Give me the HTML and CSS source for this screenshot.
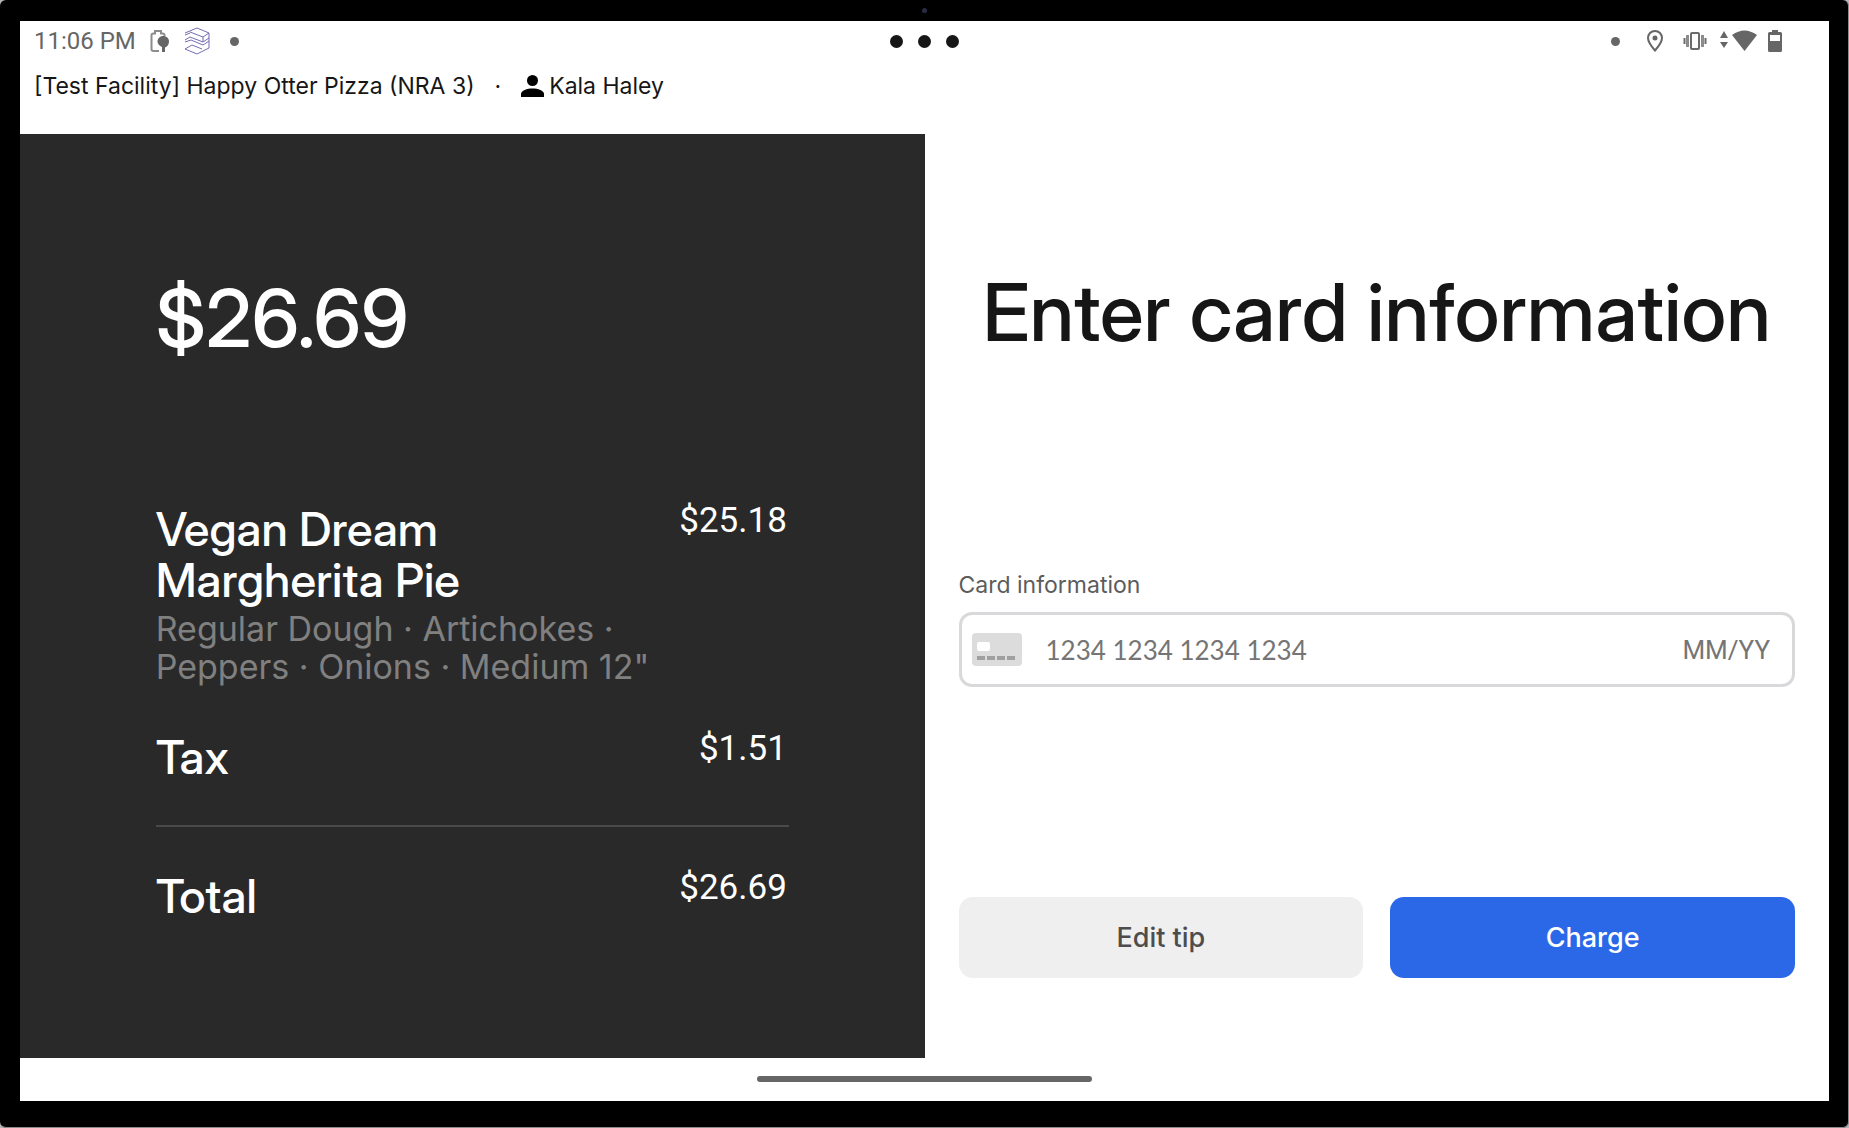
FILE: index.html
```html
<!DOCTYPE html>
<html lang="en">
<head>
    <meta charset="UTF-8">
    <meta name="viewport" content="width=device-width, initial-scale=1.0">
    <title>Enter card information</title>
    <link rel="stylesheet" href="styles.css">
</head>
<body>
    <div class="device">
        <span class="camera"></span>
        <div class="screen">
            <div class="status-bar">
                <div class="status-left">
                    <span class="clock">11:06 PM</span>
                    <svg class="icon-saver" width="20" height="24" viewBox="0 0 20 24">
                        <path d="M9 22H3.500Q1.500 22 1.500 20V6Q1.500 4.500 3.500 4.500H5V2H11V4.500H12.500Q14.500 4.500 14.500 6V7" fill="none" stroke="#8c8c8c" stroke-width="2"/>
                        <path d="M13 7C17 7 19 9.500 19 12.500C19 15.500 17 18 15 18.500V23H12V18C9.500 17 7.500 15 7.500 12.500C7.500 9.500 10 7 13 7Z" fill="#666"/>
                    </svg>
                    <svg class="icon-layers" width="26" height="28" viewBox="0 0 26 28" fill="none" stroke="#736db5" stroke-width="1">
                        <path d="M1 6L13 1L25 6L19 10L6 5M1 8L6 6"/>
                        <path d="M25 6V11L19 15L6 10L1 13"/>
                        <path d="M1 15L7 13L19 18L25 14V21L13 27L1 22L8 18L18 22"/>
                        <path d="M19 10V15M25 11V14"/>
                    </svg>
                    <span class="dot"></span>
                </div>
                <div class="status-center">
                    <span></span><span></span><span></span>
                </div>
                <div class="status-right">
                    <span class="dot"></span>
                    <svg class="icon-pin" width="16" height="22" viewBox="0 0 16 22">
                        <path d="M8 1C4 1 1 4 1 8C1 12.500 8 20.500 8 20.500S15 12.500 15 8C15 4 12 1 8 1Z" fill="none" stroke="#666" stroke-width="2"/>
                        <circle cx="8" cy="8" r="2.500" fill="#666"/>
                    </svg>
                    <svg class="icon-vibrate" width="24" height="18" viewBox="0 0 24 18" fill="none" stroke="#6b6b6b">
                        <rect x="8" y="1" width="8" height="16" rx="1" stroke-width="2"/>
                        <path d="M4.500 3V15M19.500 3V15" stroke-width="3" stroke="#8c8c8c"/>
                        <path d="M1.500 6V12M22.500 6V12" stroke-width="2"/>
                    </svg>
                    <svg class="icon-wifi" width="37" height="22" viewBox="0 0 37 22" fill="#666">
                        <path d="M0 8L4 1L8 8ZM0 12L4 18L8 12Z"/>
                        <path d="M12 5Q24.500 -4 37 5L24.500 21Z"/>
                    </svg>
                    <svg class="icon-battery" width="14" height="22" viewBox="0 0 14 22">
                        <path d="M4 0H10V2H12.500Q14 2 14 3.500V20.500Q14 22 12.500 22H1.500Q0 22 0 20.500V3.500Q0 2 1.500 2H4Z" fill="#666"/>
                        <rect x="2" y="5" width="10" height="6" fill="#fff"/>
                    </svg>
                </div>
            </div>

            <header class="facility-bar">
                <span>[Test Facility] Happy Otter Pizza (NRA 3)</span>
                <span class="separator">·</span>
                <span class="employee">
                    <svg width="23" height="22" viewBox="0 0 23 22">
                        <circle cx="11.500" cy="5.500" r="5.500"/>
                        <path d="M0 22V19C0 15.500 6 13.500 11.500 13.500S23 15.500 23 19V22Z"/>
                    </svg>
                    Kala Haley
                </span>
            </header>

            <main class="checkout">
                <section class="summary">
                    <p class="amount">$26.69</p>
                    <div class="line-item">
                        <div class="line-name">
                            <h2>Vegan Dream Margherita Pie</h2>
                            <p class="modifiers">Regular Dough · Artichokes · Peppers · Onions · Medium 12"</p>
                        </div>
                        <span class="price">$25.18</span>
                    </div>
                    <div class="line-item">
                        <h2>Tax</h2>
                        <span class="price">$1.51</span>
                    </div>
                    <hr>
                    <div class="line-item">
                        <h2>Total</h2>
                        <span class="price">$26.69</span>
                    </div>
                </section>

                <form class="payment">
                    <h1>Enter card information</h1>
                    <label for="cardNumber">Card information</label>
                    <div class="card-field">
                        <svg width="50" height="33" viewBox="0 0 50 33">
                            <rect width="50" height="33" rx="4" fill="#dcdcdc"/>
                            <rect x="5" y="9" width="13" height="9" rx="2" fill="#fff"/>
                            <path d="M5 25H45" stroke="#a0a0a0" stroke-width="4" stroke-dasharray="8 2"/>
                        </svg>
                        <input type="text" id="cardNumber" class="card-number" placeholder="1234 1234 1234 1234">
                        <input type="text" class="card-expiry" placeholder="MM/YY" aria-label="Expiration date">
                    </div>
                    <div class="actions">
                        <button type="button" class="btn">Edit tip</button>
                        <button type="submit" class="btn btn-primary">Charge</button>
                    </div>
                </form>
            </main>

            <div class="nav-bar"><span class="nav-handle"></span></div>
        </div>
    </div>
</body>
</html>
```

FILE: styles.css
```css
* {
    margin: 0;
    padding: 0;
    box-sizing: border-box;
}

body {
    font-family: Inter, Roboto, sans-serif;
    background: #b5b5b9;
    color: #161616;
}

svg {
    display: block;
    flex-shrink: 0;
}

/* tablet bezel */
.device {
    position: relative;
    display: flex;
    min-height: 100vh;
    padding: 21px 19px 26px 20px;
    background: #000;
    border: solid #8c8c8c;
    border-width: 0 1px 1px 0;
    border-radius: 6px;
}

.camera {
    position: absolute;
    top: 8px;
    left: 50%;
    width: 5px;
    height: 5px;
    margin-left: -2px;
    border-radius: 50%;
    background: #2b2b45;
}

.screen {
    flex: 1;
    display: flex;
    flex-direction: column;
    background: #fff;
}

/* status bar */
.status-bar {
    display: grid;
    grid-template-columns: 1fr auto 1fr;
    align-items: center;
    height: 40px;
    padding: 0 14px;
}

.status-left,
.status-center,
.status-right {
    display: flex;
    align-items: center;
}

.clock {
    font-family: Roboto, sans-serif;
    font-size: 24px;
    line-height: 28px;
    color: #666;
}

.icon-saver {
    margin-left: 14px;
}

.icon-layers {
    margin-left: 14px;
}

.dot {
    width: 9px;
    height: 9px;
    border-radius: 50%;
    background: #666;
}

.status-left .dot {
    margin-left: 20px;
}

.status-center {
    gap: 15px;
}

.status-center span {
    width: 13px;
    height: 13px;
    border-radius: 50%;
    background: #161616;
}

.status-right {
    justify-content: flex-end;
    padding-right: 33px;
}

.icon-pin {
    margin-left: 27px;
}

.icon-vibrate {
    margin-left: 20px;
}

.icon-wifi {
    margin-left: 13px;
}

.icon-battery {
    margin-left: 11px;
}

.facility-bar {
    display: flex;
    align-items: center;
    padding: 11px 14px 34px;
    font-size: 23px;
    line-height: 28px;
}

.separator {
    margin: 0 20px;
}

.employee {
    display: flex;
    align-items: center;
    gap: 5px;
}

.checkout {
    flex: 1;
    display: grid;
    grid-template-columns: minmax(0, 1fr) minmax(0, 1fr);
}

/* order summary */
.summary {
    padding: 136px 15% 0;
    background: #292929;
    color: #fff;
}

.amount,
.summary h2,
.payment h1 {
    font-family: "Inter Display", Inter, sans-serif;
    font-weight: 500;
}

.amount {
    margin-bottom: 136px;
    font-size: 80px;
    line-height: 96px;
}

.line-item {
    display: flex;
    justify-content: space-between;
    align-items: flex-start;
    margin-bottom: 42px;
}

.line-name {
    width: 500px;
    padding-bottom: 2px;
}

.line-item h2 {
    max-width: 340px;
    padding-top: 1px;
    font-size: 47px;
    line-height: 51px;
}

.modifiers {
    margin-top: 5px;
    font-size: 34px;
    line-height: 38px;
    color: #808080;
}

.price {
    padding-right: 2px;
    font-family: Roboto, sans-serif;
    font-size: 35px;
    line-height: 38px;
}

.summary hr {
    height: 2px;
    margin: 43px 0 42px;
    border: 0;
    background: #4a4a4a;
}

/* card form */
.payment {
    padding: 130px 34px 0;
}

.payment h1 {
    margin-bottom: 211px;
    font-size: 80px;
    line-height: 96px;
    text-align: center;
    white-space: nowrap;
}

.payment label {
    display: block;
    margin-bottom: 13px;
    font-size: 23px;
    line-height: 28px;
    color: #5c5c5c;
}

.card-field {
    display: flex;
    align-items: center;
    height: 75px;
    padding: 0 22px 0 10px;
    border: 3px solid #d9d9db;
    border-radius: 13px;
}

.card-field input {
    min-width: 0;
    border: 0;
    outline: none;
    background: none;
    font-size: 26px;
    line-height: 32px;
}

.card-field input::placeholder {
    color: #757575;
}

.card-number {
    flex: 1;
    margin-left: 24px;
    font-family: Lato, sans-serif;
}

.card-expiry {
    width: 120px;
    font-family: Roboto, sans-serif;
    text-align: right;
}

.actions {
    display: grid;
    grid-template-columns: 1fr 1fr;
    gap: 27px;
    margin-top: 210px;
}

.btn {
    height: 81px;
    border: 0;
    border-radius: 14px;
    background: #efefef;
    color: #4d4d4d;
    font-family: inherit;
    font-size: 27px;
    font-weight: 500;
    cursor: pointer;
}

.btn-primary {
    background: #2b68e8;
    color: #fff;
}

/* gesture handle */
.nav-bar {
    display: flex;
    justify-content: center;
    height: 43px;
    padding-top: 18px;
}

.nav-handle {
    width: 335px;
    height: 6px;
    border-radius: 3px;
    background: #666;
}
```
